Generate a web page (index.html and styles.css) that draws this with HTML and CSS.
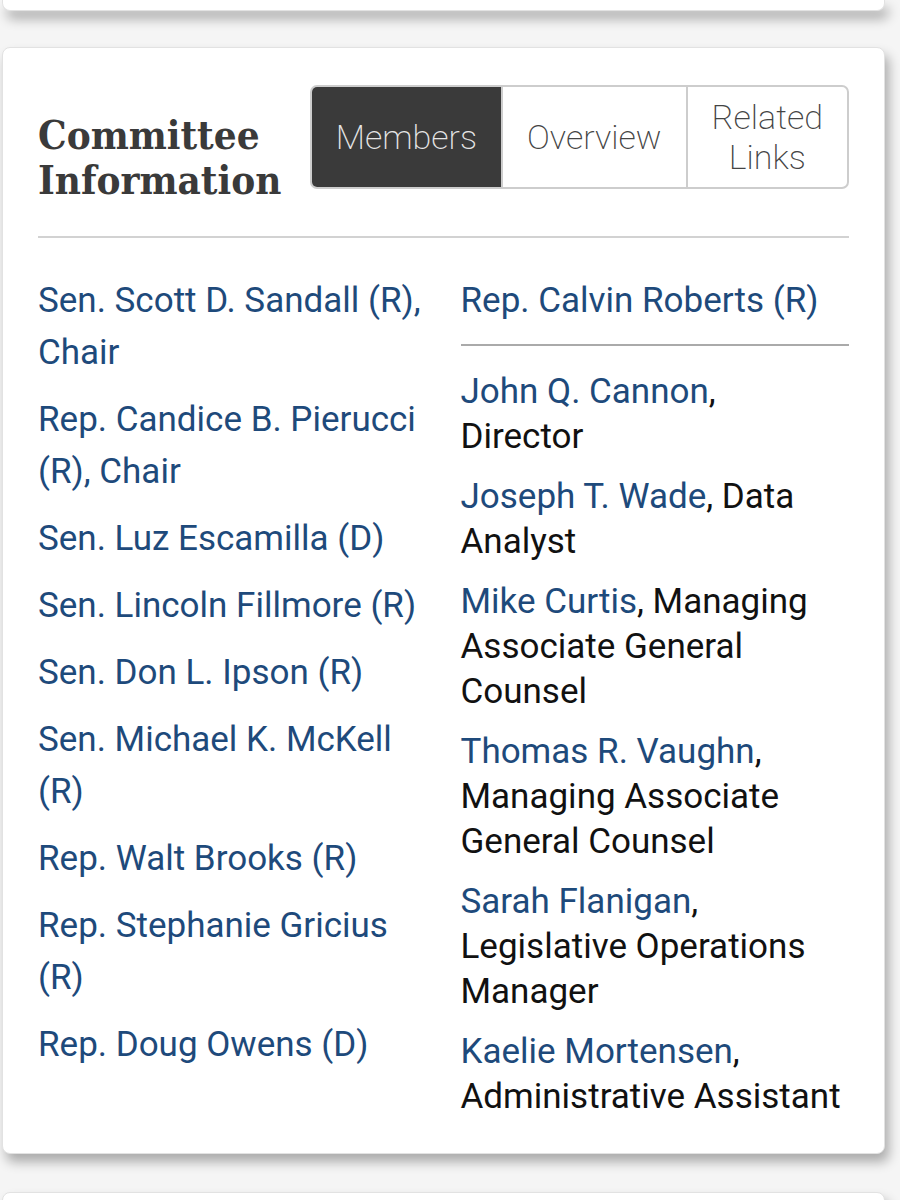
FILE: index.html
```html
<!DOCTYPE html>
<html lang="en">
<head>
<meta charset="utf-8">
<title>Committee Information</title>
<link rel="stylesheet" href="styles.css">
</head>
<body>
<div class="page">
  <div class="card card-prev"></div>

  <section class="card card-main">
    <header class="head">
      <h2 class="title">Committee Information</h2>
      <nav class="tabs">
        <a class="tab active">Members</a>
        <a class="tab">Overview</a>
        <a class="tab">Related<br>Links</a>
      </nav>
    </header>
    <hr class="rule">
    <div class="cols">
      <ul class="members">
        <li><a>Sen. Scott D. Sandall (R), Chair</a></li>
        <li><a>Rep. Candice B. Pierucci (R), Chair</a></li>
        <li><a>Sen. Luz Escamilla (D)</a></li>
        <li><a>Sen. Lincoln Fillmore (R)</a></li>
        <li><a>Sen. Don L. Ipson (R)</a></li>
        <li><a>Sen. Michael K. McKell (R)</a></li>
        <li><a>Rep. Walt Brooks (R)</a></li>
        <li><a>Rep. Stephanie Gricius (R)</a></li>
        <li><a>Rep. Doug Owens (D)</a></li>
      </ul>
      <div class="right">
        <ul class="members">
          <li><a>Rep. Calvin Roberts (R)</a></li>
        </ul>
        <hr class="rule rule-staff">
        <ul class="staff">
          <li><a>John Q. Cannon</a>, Director</li>
          <li><a>Joseph T. Wade</a>, Data Analyst</li>
          <li><a>Mike Curtis</a>, Managing Associate General Counsel</li>
          <li><a>Thomas R. Vaughn</a>, Managing Associate General Counsel</li>
          <li><a>Sarah Flanigan</a>, Legislative Operations Manager</li>
          <li><a>Kaelie Mortensen</a>, Administrative Assistant</li>
        </ul>
      </div>
    </div>
  </section>

  <div class="card card-next"></div>
</div>
</body>
</html>
```

FILE: styles.css
```css
html, body {
  margin: 0;
  padding: 0;
  background: #f5f5f5;
}

body {
  font-family: Roboto, "Liberation Sans", sans-serif;
  overflow: hidden;
  height: 1200px;
}

.page {
  padding-left: 2px;
  width: 883px;
}

.card {
  background: #ffffff;
  border: 1px solid #e2e2e2;
  border-radius: 8px;
  box-shadow: 4px 8px 12px rgba(0, 0, 0, 0.3);
  box-sizing: border-box;
}

.card-prev {
  height: 11px;
  border-top: none;
  border-radius: 0 0 8px 8px;
  margin-bottom: 36px;
}

.card-main {
  padding: 37px 35px 34px 35px;
}

.card-next {
  margin-top: 38px;
  height: 60px;
}

.head {
  display: flex;
  justify-content: space-between;
  align-items: flex-end;
}

.title {
  margin: 0 0 -13px 0;
  font-family: "DejaVu Serif", "Liberation Serif", serif;
  font-stretch: condensed;
  font-weight: bold;
  font-size: 40px;
  line-height: 45px;
  color: #3a3a3a;
  width: 260px;
}

.tabs {
  display: flex;
  border: 2px solid #cdcdcd;
  border-radius: 7px;
  overflow: hidden;
  height: 104px;
  box-sizing: border-box;
}

.tab {
  display: flex;
  align-items: center;
  justify-content: center;
  text-align: center;
  padding: 0 24px;
  font-size: 34px;
  line-height: 40px;
  font-weight: 200;
  color: #444444;
  border-left: 2px solid #cdcdcd;
}

.tab:first-child {
  border-left: none;
}

.tab.active {
  background: #3a3a3a;
  color: #e6e6e6;
}

.rule {
  border: none;
  border-top: 2px solid #d2d2d2;
  margin: 47px 0 37px 0;
}

.cols {
  display: grid;
  grid-template-columns: 1fr 1fr;
  column-gap: 34px;
}

ul {
  list-style: none;
  margin: 0;
  padding: 0;
}

a {
  color: #1e4a7b;
  text-decoration: none;
}

.members li {
  font-size: 35px;
  line-height: 52px;
  color: #1e4a7b;
  margin-bottom: 15px;
}

.members li:last-child {
  margin-bottom: 0;
}

.rule-staff {
  border-top-color: #aaaaaa;
  margin: 17px 0 23px 0;
}

.staff li {
  font-size: 35px;
  line-height: 45px;
  color: #111111;
  margin-bottom: 15px;
  padding-right: 4px;
}

.staff li:last-child {
  margin-bottom: 0;
}
```
